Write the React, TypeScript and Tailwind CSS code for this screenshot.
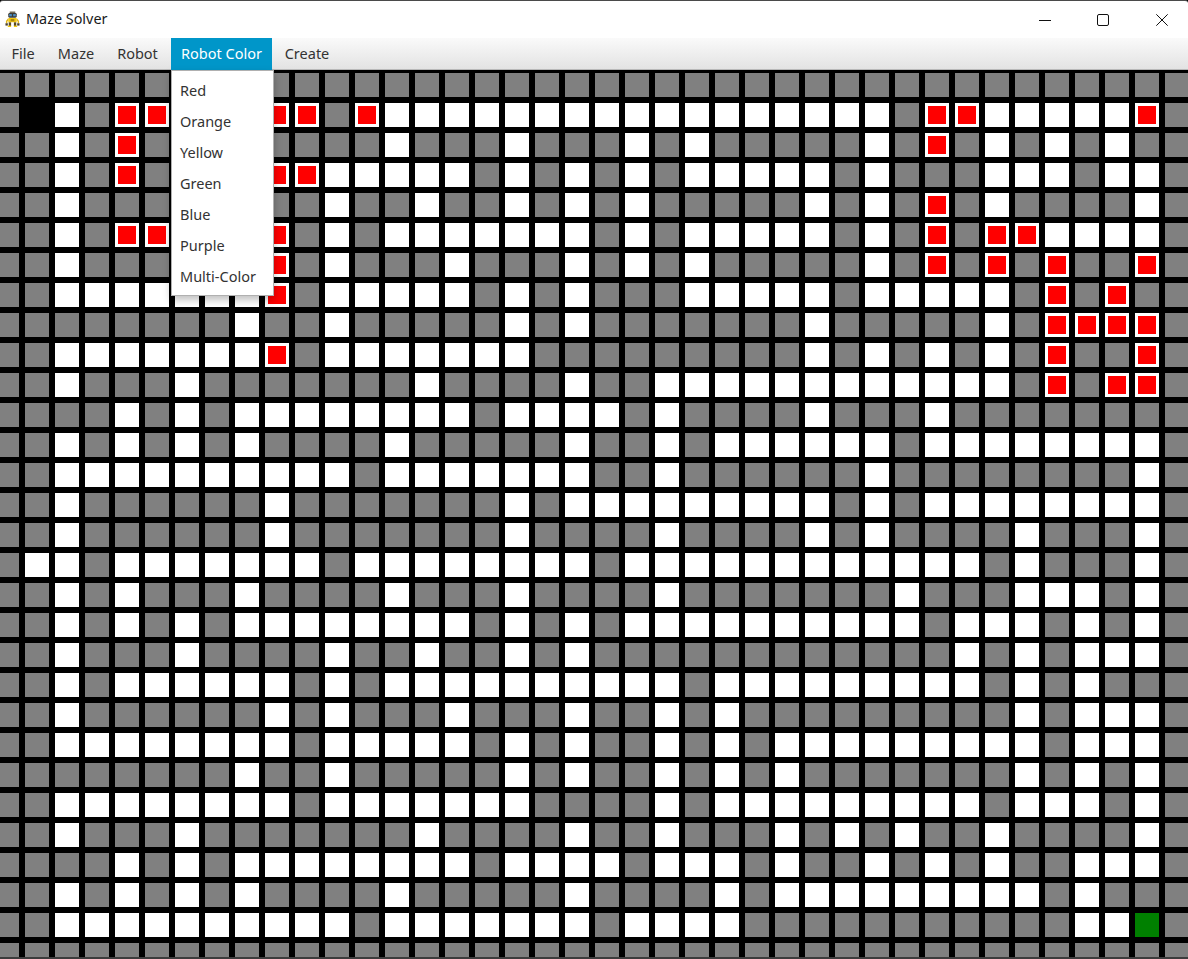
const LEFT = [
  "####################",
  "#S.#RRRRRRR#R.......",
  "##.#R########.###.##",
  "##.#R####RR.....#.#.",
  "##.########.##.##.#.",
  "##.#RR###R#.#.......",
  "##.######R#.###.###.",
  "##.......R#.....#.#.",
  "########.##.#####.#.",
  "##.......R#.......##",
  "##.###.#######.####.",
  "####.#.#........#...",
  "##.#.#.#.####.#####.",
  "##..........#.......",
  "##.######.#######.#.",
  "##.######.#######.##",
  "#..#.......#........",
  "##.#.###.####.###.##",
  "##.#.#.#........#.#.",
  "##.###.####.##.##.#.",
  "##.#......#.#.......",
  "##.######.#.###.###.",
  "##........#.....#.#.",
  "########.##.#####.#.",
  "##........#.......##",
  "##.###.#######.####.",
  "####.#.#........#...",
  "##.#.#.#.####.#####.",
  "##..........#.......",
  "####################",
];

const RIGHT = [
  "####################",
  "..........#RR.....R#",
  "#.#.#####.#R#.#.#.##",
  "#.#.....#.###...#..#",
  "#.#####.#.#R#.####.#",
  "#.#.....#.#R#RR....#",
  "#.#.#####.#R#R#R##R#",
  "###.....#.....#R#R##",
  "#######.#####.#RRRR#",
  "#######.#.#.#.#R##R#",
  "##............#R#RR#",
  ".#.####.###.########",
  "##.#......#........#",
  "##.######.########.#",
  "........#.#........#",
  "##.####.#.####.###.#",
  "#............#.###.#",
  "##.#######.###...#.#",
  "#..........#...#.#.#",
  "############.#.#...#",
  "...#.........#.#.###",
  "##.#.#########.#...#",
  "##.#.#.........#...#",
  "##.#.#.#######.#.#.#",
  "##.#.........#...#.#",
  "##.###.#.#.##.####.#",
  ".#...#.##.#.#.##...#",
  "####.#.........#.###",
  "#....###########..G#",
  "####################",
];

const MAZE = LEFT.map((row, i) => row + RIGHT[i]);

function Cell({ kind }: { kind: string }) {
  if (kind === "#") return <div className="bg-[#808080]" />;
  if (kind === ".") return <div className="bg-white" />;
  if (kind === "S") return <div className="bg-black" />;
  if (kind === "G") return <div className="bg-[#008000]" />;
  return <div className="border-[3px] border-white bg-[#ff0000]" />;
}

function RobotIcon() {
  return (
    <svg width="15" height="17" viewBox="0 0 16 18" className="shrink-0">
      <rect x="5" y="0.5" width="6" height="1.5" fill="#6b6250" />
      <rect x="3.5" y="2" width="9" height="5" rx="1.5" fill="#3d3a35" />
      <rect x="4.5" y="3.2" width="2.8" height="2.4" fill="#4a90c8" />
      <rect x="8.7" y="3.2" width="2.8" height="2.4" fill="#4a90c8" />
      <rect x="3.5" y="7.5" width="9" height="4.5" rx="1" fill="#f2c811" />
      <rect x="6" y="8.5" width="4" height="2.5" fill="#a8850f" />
      <path d="M3.5 7.5L1 10.5V13H2.5V11L3.5 10Z" fill="#e0b51a" />
      <path d="M12.5 7.5L15 10.5V13H13.5V11L12.5 10Z" fill="#e0b51a" />
      <rect x="0.5" y="13" width="2.5" height="2.5" fill="#4a4030" />
      <rect x="13" y="13" width="2.5" height="2.5" fill="#4a4030" />
      <rect x="4" y="12" width="2.5" height="4" fill="#5a4a20" />
      <rect x="9.5" y="12" width="2.5" height="4" fill="#5a4a20" />
      <rect x="3" y="15.5" width="3.5" height="1.5" fill="#f2c811" />
      <rect x="9.5" y="15.5" width="3.5" height="1.5" fill="#f2c811" />
    </svg>
  );
}

const COLORS = ["Red", "Orange", "Yellow", "Green", "Blue", "Purple", "Multi-Color"];

export default function App() {
  return (
    <div className="relative flex h-[959px] w-[1188px] flex-col overflow-hidden bg-black font-['Noto_Sans','Open_Sans',sans-serif]">
      <header className="flex h-[38px] shrink-0 items-center justify-between rounded-t-[3px] border-t border-t-[#4a4a4a] bg-white">
        <div className="flex items-center gap-[6px] pl-[5px]">
          <RobotIcon />
          <span className="text-[14.4px] leading-none text-[#1a1a1a]">Maze Solver</span>
        </div>
        <div className="flex items-center">
          <button className="flex h-[37px] w-[58px] items-center justify-center">
            <svg width="12" height="12" viewBox="0 0 12 12">
              <path d="M0 6.5H12" stroke="#111" strokeWidth="1" />
            </svg>
          </button>
          <button className="flex h-[37px] w-[58px] items-center justify-center">
            <svg width="12" height="12" viewBox="0 0 12 12">
              <rect x="0.5" y="0.5" width="11" height="11" rx="1.5" fill="none" stroke="#111" strokeWidth="1" />
            </svg>
          </button>
          <button className="flex h-[37px] w-[56px] items-center justify-center pl-[4px]">
            <svg width="12" height="12" viewBox="0 0 12 12">
              <path d="M0.3 0.3L11.7 11.7M11.7 0.3L0.3 11.7" stroke="#111" strokeWidth="1" />
            </svg>
          </button>
        </div>
      </header>

      <nav className="flex h-[32px] shrink-0 gap-[3px] border-b border-b-[#b8b8b8] bg-linear-to-b from-[#fafafa] to-[#e3e3e3] pl-[2px] text-[14.5px] text-[#333333]">
        <div className="flex w-[42px] items-center justify-center">File</div>
        <div className="flex w-[57px] items-center justify-center pl-[1px]">Maze</div>
        <div className="flex w-[61px] items-center justify-center">Robot</div>
        <div className="-mb-px flex w-[101px] items-center justify-center bg-[#0096c9] text-white">Robot Color</div>
        <div className="flex w-[63px] items-center justify-center pl-[1px]">Create</div>
      </nav>

      <main className="min-h-0 flex-1 overflow-hidden pt-[3px]">
        <div className="-ml-[5px] grid w-max grid-cols-[repeat(40,24px)] auto-rows-[24px] gap-[6px]">
          {MAZE.flatMap((row, r) =>
            row.split("").map((kind, c) => <Cell key={`${r}-${c}`} kind={kind} />)
          )}
        </div>
      </main>
      <div className="h-[2px] shrink-0 bg-[#3c3c3c]" />

      <ul className="absolute left-[171px] top-[70px] h-[226px] w-[103px] border border-[#b0b0b0] bg-white pt-[4px] text-[14.5px] text-[#333333] shadow-[0_4px_8px_rgba(0,0,0,0.25)]">
        {COLORS.map((name) => (
          <li key={name} className="flex h-[31px] items-center pl-[8px]">
            {name}
          </li>
        ))}
      </ul>
    </div>
  );
}
